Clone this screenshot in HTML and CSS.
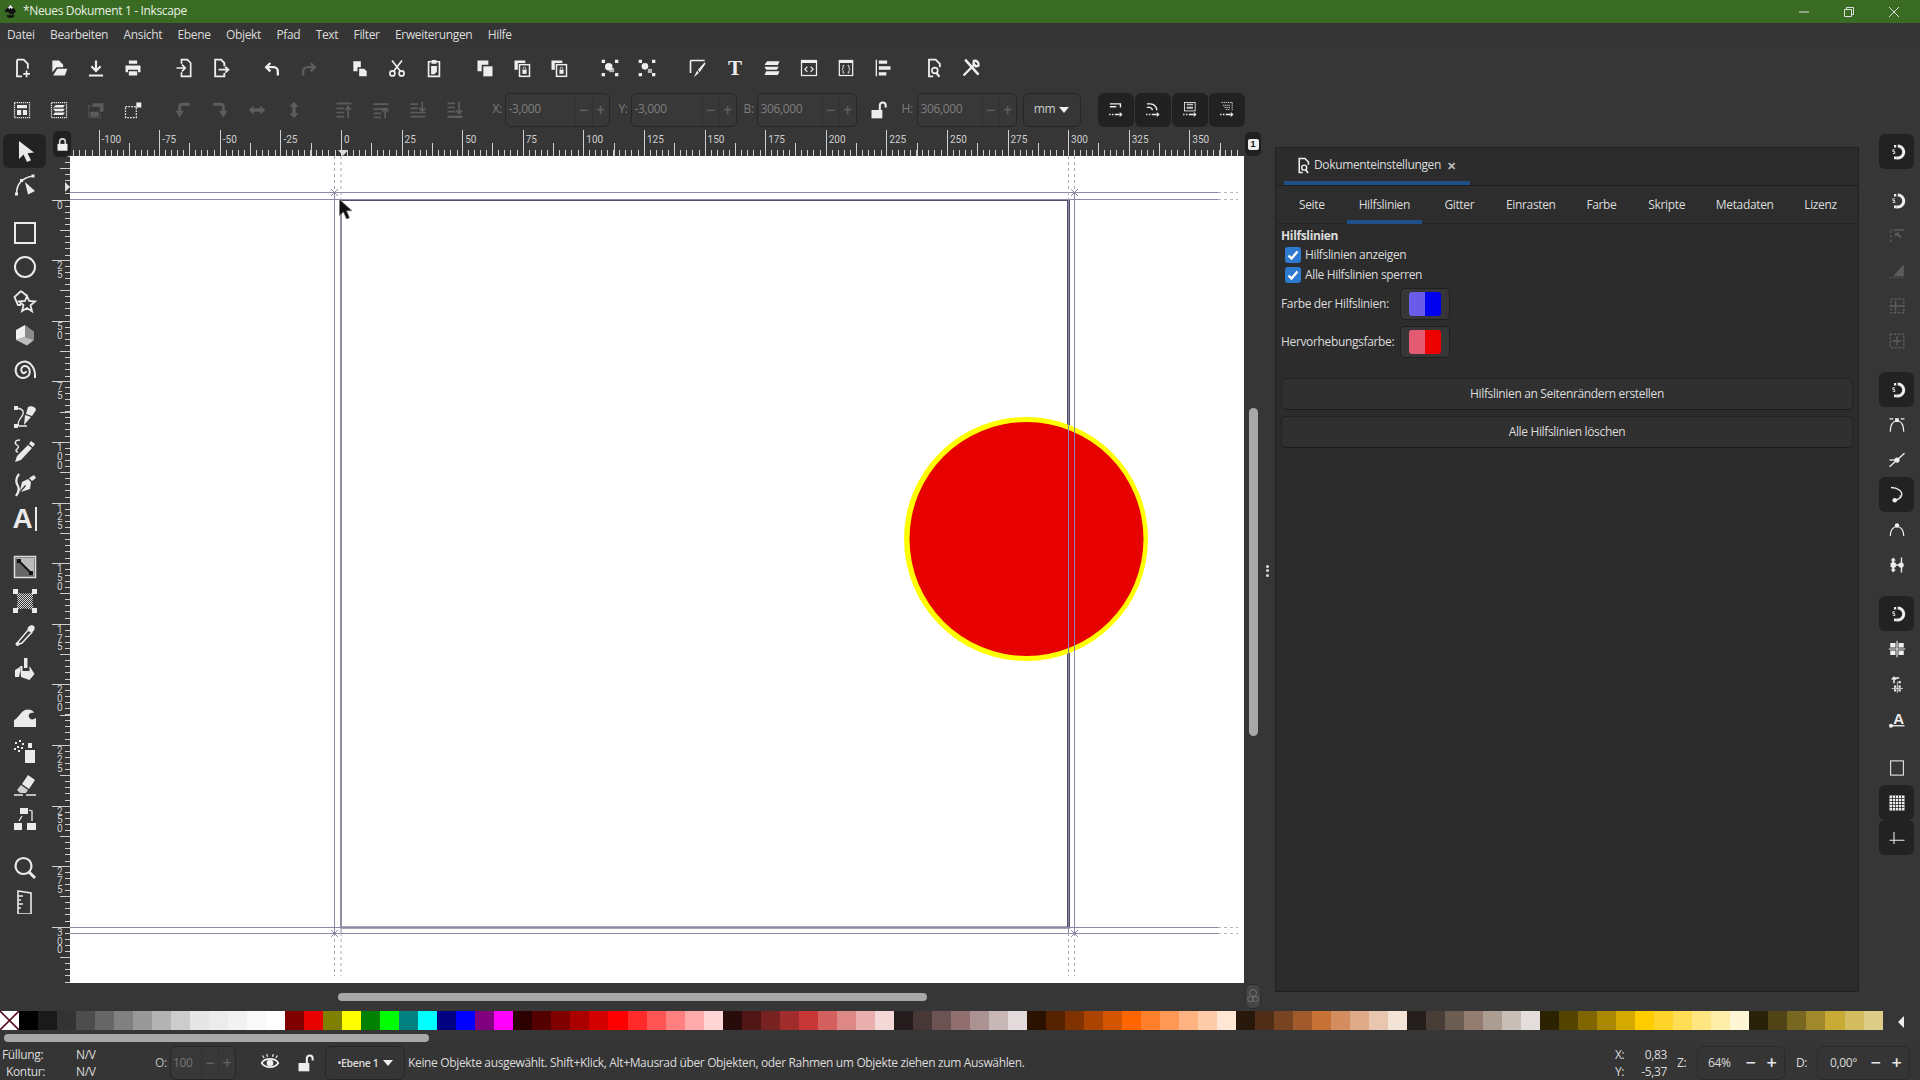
FILE: index.html
```html
<!DOCTYPE html>
<html lang="de">
<head>
<meta charset="utf-8">
<title>Neues Dokument 1 - Inkscape</title>
<link rel="stylesheet" href="styles.css">
</head>
<body>
<svg class="sprite" xmlns="http://www.w3.org/2000/svg">
<defs>
<pattern id="chk" width="2" height="2" patternUnits="userSpaceOnUse"><rect width="2" height="2" fill="#333"/><rect width="1" height="1" fill="#ddd"/><rect x="1" y="1" width="1" height="1" fill="#ddd"/></pattern>
<symbol id="new" viewBox="0 0 24 24"><path d="M6 2h8l5 5v6M6 2v20h6" fill="none" stroke="currentColor" stroke-width="2.200"/><path d="M17.500 15v8M13.500 19h8" fill="none" stroke="currentColor" stroke-width="2"/></symbol>
<symbol id="open" viewBox="0 0 24 24"><path d="M4 3h8l5 5v3H9l-5 6z"/><path d="M5 21l5-8h12l-3 8z"/></symbol>
<symbol id="save" viewBox="0 0 24 24"><path d="M12 3v12M6.500 10l5.500 5.500 5.500-5.500M3.500 21h17" fill="none" stroke="currentColor" stroke-width="2.600"/></symbol>
<symbol id="print" viewBox="0 0 24 24"><path d="M7 3h10v4H7zM3 9h18v8h-3v-3H6v3H3zM7 16h10v5H7z"/></symbol>
<symbol id="import" viewBox="0 0 24 24"><path d="M9 7V2h7l4 4v16H9v-5" fill="none" stroke="currentColor" stroke-width="2"/><path d="M3 12h10M9.500 8l4 4-4 4" fill="none" stroke="currentColor" stroke-width="2"/></symbol>
<symbol id="export" viewBox="0 0 24 24"><path d="M16 10V6l-4-4H5v20h11v-4" fill="none" stroke="currentColor" stroke-width="2.200"/><path d="M9 14h11M17 10.500l4 3.500-4 3.500" fill="none" stroke="currentColor" stroke-width="2"/></symbol>
<symbol id="undo" viewBox="0 0 24 24"><path d="M10 6l-5 5 5 5M5 11h9a5 5 0 0 1 5 5v5" fill="none" stroke="currentColor" stroke-width="2.800"/></symbol>
<symbol id="redo" viewBox="0 0 24 24"><path d="M14 6l5 5-5 5M19 11h-9a5 5 0 0 0-5 5v5" fill="none" stroke="currentColor" stroke-width="2.800"/></symbol>
<symbol id="copy" viewBox="0 0 24 24"><path d="M4 4h9v7H9v5H4z"/><path d="M11 13h6l3 3v6h-9z"/></symbol>
<symbol id="cut" viewBox="0 0 24 24"><g fill="none" stroke="currentColor" stroke-width="2"><circle cx="6.500" cy="18.500" r="3"/><circle cx="17.500" cy="18.500" r="3"/><path d="M8 16L18 3M16 16L6 3"/></g></symbol>
<symbol id="clip" viewBox="0 0 24 24"><path d="M9 4.500H5.500V22h13V4.500H15" fill="none" stroke="currentColor" stroke-width="2"/><path d="M9 2.500h6V7H9zM8.500 9.500h7v7l-3 3h-4z"/></symbol>
<symbol id="dup" viewBox="0 0 24 24"><path d="M3 3h13v5H8v8H3z"/><path d="M10 10h11v12H10z"/></symbol>
<symbol id="clone" viewBox="0 0 24 24"><path d="M3 3h13v3H7v8H3z"/><rect x="9" y="8" width="12" height="14" fill="none" stroke="currentColor" stroke-width="1.800"/><path d="M12.500 14h5v5h-5z"/><path d="M13.500 14v-1.500a1.500 1.500 0 0 1 3 0V14" fill="none" stroke="currentColor"/></symbol>
<symbol id="group" viewBox="0 0 24 24"><path d="M2 2h4v4H2zM18 2h4v4h-4zM2 18h4v4H2zM18 18h4v4h-4z"/><circle cx="10.500" cy="10.500" r="4.500"/><path d="M11 12h6v5h-6z" opacity=".7"/></symbol>
<symbol id="ungroup" viewBox="0 0 24 24"><path d="M2 2h4v4H2zM18 2h4v4h-4zM2 18h4v4H2zM18 18h4v4h-4z"/><circle cx="9.500" cy="10" r="4"/><path d="M13 13h5v5h-5z" opacity=".7"/></symbol>
<symbol id="fs" viewBox="0 0 24 24"><path d="M3 3h17M3 3v15" fill="none" stroke="currentColor" stroke-width="2"/><path d="M20 5L12 14l2 3 7-10zM11 15l2 3-6 5z"/></symbol>
<symbol id="layers" viewBox="0 0 24 24"><path d="M6 4h15l-2 4.500H3zM3 10.500h17l-2 3.500H5zM5 16h16l-2 4.500H3z"/></symbol>
<symbol id="xml" viewBox="0 0 24 24"><rect x="3" y="3" width="18" height="18" fill="none" stroke="currentColor" stroke-width="1.500"/><path d="M3 3h18v3H3z"/><path d="M10 10.500l-3 3 3 3M14 10.500l3 3-3 3" fill="none" stroke="currentColor" stroke-width="1.300"/></symbol>
<symbol id="css" viewBox="0 0 24 24"><rect x="4" y="3" width="16" height="18" fill="none" stroke="currentColor" stroke-width="1.500"/><path d="M4 3h16v3H4z"/><path d="M10 9H8.500v3l-1 1.500 1 1.500v3H10M14 9h1.500v3l1 1.500-1 1.500v3H14" fill="none" stroke="currentColor" stroke-width="1.100"/></symbol>
<symbol id="align" viewBox="0 0 24 24"><path d="M4 2v20" fill="none" stroke="currentColor" stroke-width="1.600"/><path d="M7 3h10v4H7zM7 10h14v4H7zM7 17h9v4H7z"/></symbol>
<symbol id="doc" viewBox="0 0 24 24"><path d="M11 22H6V2h8l5 5v4" fill="none" stroke="currentColor" stroke-width="2.200"/><circle cx="13" cy="15" r="3.500" fill="none" stroke="currentColor" stroke-width="2"/><path d="M15 18l3.500 4.500" fill="none" stroke="currentColor" stroke-width="2.500"/></symbol>
<symbol id="tools" viewBox="0 0 24 24"><path d="M3 21L16 8M15.500 3.500a4.500 4.500 0 0 1 5.500 5.500l-3 1-3-3z" fill="none" stroke="currentColor" stroke-width="2.800"/><path d="M5 2L21 20" fill="none" stroke="currentColor" stroke-width="3"/></symbol>
<symbol id="selall" viewBox="0 0 24 24"><rect x="3" y="3" width="18" height="18" fill="none" stroke="currentColor" stroke-width="1.500" stroke-dasharray="1.500 1"/><path d="M6 6h12v4H6zM6 12h5v6H6zM13 12h5v6h-5z"/></symbol>
<symbol id="sellay" viewBox="0 0 24 24"><rect x="3" y="3" width="18" height="18" fill="none" stroke="currentColor" stroke-width="1.500" stroke-dasharray="1.500 1"/><path d="M8 6h11l-2 3H5zM5 10.500h14l-2 3H7zM7 15h12l-2 3H5z"/></symbol>
<symbol id="desel" viewBox="0 0 24 24"><rect x="3" y="7" width="14" height="14" fill="none" stroke="currentColor" stroke-width="1.500" stroke-dasharray="1.500 1"/><path d="M8 4h13v10h-4V8H8zM5 14h10v6H5z"/></symbol>
<symbol id="trans" viewBox="0 0 24 24"><rect x="3" y="8" width="13" height="13" fill="none" stroke="currentColor" stroke-width="1.500" stroke-dasharray="2 1.500"/><path d="M16 3h6v6h-6z"/></symbol>
<symbol id="rccw" viewBox="0 0 24 24"><path d="M20 5h-9a3 3 0 0 0-3 3v6" fill="none" stroke="currentColor" stroke-width="3.500"/><path d="M3 13h10l-5 8z"/></symbol>
<symbol id="rcw" viewBox="0 0 24 24"><path d="M4 5h9a3 3 0 0 1 3 3v6" fill="none" stroke="currentColor" stroke-width="3.500"/><path d="M21 13H11l5 8z"/></symbol>
<symbol id="fliph" viewBox="0 0 24 24"><path d="M2 12l6-5.500V10h8V6.500l6 5.500-6 5.500V14H8v3.500z"/></symbol>
<symbol id="flipv" viewBox="0 0 24 24"><path d="M12 2l5.500 6H14v8h3.500L12 22l-5.500-6H10V8H6.500z"/></symbol>
<symbol id="rtop" viewBox="0 0 24 24"><path d="M3 3h18v2.500H3zM3 9h9v2H3zM3 14h9v2H3zM3 19h9v2H3z"/><path d="M17 22V9M13.500 12l3.500-4 3.500 4" fill="none" stroke="currentColor" stroke-width="2"/></symbol>
<symbol id="rup" viewBox="0 0 24 24"><path d="M3 4h18v2H3zM3 10h18v2H3zM3 15h9v2H3zM3 20h9v2H3z"/><path d="M17 22V11M13.500 14l3.500-4 3.500 4" fill="none" stroke="currentColor" stroke-width="2"/></symbol>
<symbol id="ldown" viewBox="0 0 24 24"><path d="M3 4h9v2H3zM3 9h9v2H3zM3 14h18v2H3zM3 19h18v2H3z"/><path d="M17 2v11M13.500 9.500l3.500 4 3.500-4" fill="none" stroke="currentColor" stroke-width="2"/></symbol>
<symbol id="lbot" viewBox="0 0 24 24"><path d="M3 3h9v2H3zM3 8h9v2H3zM3 13h9v2H3zM3 19h18v2.500H3z"/><path d="M17 2v14M13.500 12.500l3.500 4 3.500-4" fill="none" stroke="currentColor" stroke-width="2"/></symbol>
<symbol id="lock" viewBox="0 0 24 24"><path d="M4 11h16v11H4z"/><path d="M7.500 11V7.500a4.500 4.500 0 0 1 9 0V11" fill="none" stroke="currentColor" stroke-width="2.500"/></symbol>
<symbol id="unlock" viewBox="0 0 24 24"><path d="M3 12h13v10H3z"/><path d="M13 12V6.500a3.500 3.500 0 0 1 7 0V9" fill="none" stroke="currentColor" stroke-width="2.500"/></symbol>
<symbol id="eye" viewBox="0 0 24 24"><path d="M2 12c4-6.500 16-6.500 20 0-4 6.500-16 6.500-20 0z" fill="none" stroke="currentColor" stroke-width="2"/><circle cx="12" cy="12" r="4"/><path d="M5 6L3 3M9 4.500L8 1.500M15 4.500l1-3M19 6l2-3" fill="none" stroke="currentColor" stroke-width="1.500"/></symbol>
<symbol id="tg1" viewBox="0 0 24 24"><path d="M4 4h15v5M4 8h9M3 19h2M7 19h2M11 19h7" fill="none" stroke="currentColor" stroke-width="2"/><path d="M18 15.500l4 3.500-4 3.500z"/></symbol>
<symbol id="tg2" viewBox="0 0 24 24"><path d="M4 4h5a9 9 0 0 1 9 9M4 9h4a5 5 0 0 1 4 4M3 19h2M7 19h2M11 19h7" fill="none" stroke="currentColor" stroke-width="2"/><path d="M18 15.500l4 3.500-4 3.500z"/></symbol>
<symbol id="tg3" viewBox="0 0 24 24"><rect x="5" y="2" width="15" height="12" fill="none" stroke="currentColor" stroke-width="1.200"/><path d="M8 4h9v2H8zM8 8h9v3H8z" opacity=".8"/><path d="M3 19h2M7 19h2M11 19h7" fill="none" stroke="currentColor" stroke-width="2"/><path d="M18 15.500l4 3.500-4 3.500z"/></symbol>
<symbol id="tg4" viewBox="0 0 24 24"><path d="M5 2h15M20 2v12M7 6h10M9 9h8M11 12h6" fill="none" stroke="currentColor" stroke-width="1.200" stroke-dasharray="2 1"/><path d="M3 19h2M7 19h2M11 19h7" fill="none" stroke="currentColor" stroke-width="2"/><path d="M18 15.500l4 3.500-4 3.500z"/></symbol>
<symbol id="t-sel" viewBox="0 0 24 24"><path d="M6 2v18l4.500-4.500L14 23l4-1.800-3.500-7 6.500-.7z"/></symbol>
<symbol id="t-node" viewBox="0 0 24 24"><path d="M3.500 21C3.500 12 8 5 20 3" fill="none" stroke="currentColor" stroke-width="1.600"/><path d="M2 19.500h3v3H2zM7 6h3v3H7zM18.500 1.500h3v3h-3zM12 9l10 9-7 3.500z"/></symbol>
<symbol id="t-rect" viewBox="0 0 24 24"><rect x="2" y="2" width="20" height="20" fill="none" stroke="currentColor" stroke-width="2"/></symbol>
<symbol id="t-ell" viewBox="0 0 24 24"><circle cx="12" cy="12" r="10" fill="none" stroke="currentColor" stroke-width="2"/></symbol>
<symbol id="t-star" viewBox="0 0 24 24"><path d="M8 2L1.500 8 5 16h3M8 2l6 5" fill="none" stroke="currentColor" stroke-width="1.800"/><path d="M14 7l2.200 5 5.800.5-4.500 3.800 1.500 6-5-3.300-5 3 1.500-5.800-4.500-3.700 6-.5z" fill="none" stroke="currentColor" stroke-width="1.800"/></symbol>
<symbol id="t-3d" viewBox="0 0 24 24"><path d="M12 2L3 7v10l9-3z" fill="#f0f0f0"/><path d="M12 2l9 6.500V17l-9-3z" fill="#8a8a8a"/><path d="M3 17l9-3 9 3-7 5.500z" fill="#bdbdbd"/></symbol>
<symbol id="t-spi" viewBox="0 0 24 24"><path d="M22 21c1-11-6-18-13-16C3 7 1 13 4 18c3 4 9 4 12 0 2-4 0-9-4-9-3 0-5 3-3 6 1 2 4 1 4-1" fill="none" stroke="currentColor" stroke-width="2"/></symbol>
<symbol id="t-bez" viewBox="0 0 24 24"><path d="M3 3c10 1 8 6 4 11-2 3-3 5-1 7h8" fill="none" stroke="currentColor" stroke-width="1.300"/><path d="M1 1h4v4H1zM1 19h4v4H1zM15 2c3-2 8 0 8 3l-4 6-6-2zM12 10l6 2-7 8z"/></symbol>
<symbol id="t-pen" viewBox="0 0 24 24"><path d="M18 2l4 3-2 3-4-3zM15 6l4 3L8 21l-6 2 2-6z"/><path d="M7 1C2 1 1 4 4 6c3 2 1 3-1 5 0 2 2 2 2 2" fill="none" stroke="currentColor" stroke-width="1.400"/></symbol>
<symbol id="t-cal" viewBox="0 0 24 24"><path d="M21 2l2 3-4 3-3-3zM15 6l3 3-1 7-9 3 5-6-1-1-5 6 2-9z"/><path d="M6 1C2 6 3 10 5 13c2 4 0 7-2 10" fill="none" stroke="currentColor" stroke-width="2.200"/></symbol>
<symbol id="t-grad" viewBox="0 0 24 24"><rect x="1.500" y="1.500" width="21" height="21" fill="#666" stroke="#ddd" stroke-width="1.500"/><path d="M3 3h18v18z" fill="#bbb"/><path d="M6 6l12 12" stroke="#111" stroke-width="1.800"/><path d="M4 4h4v4H4zM16 16h4v4h-4z" fill="#111"/></symbol>
<symbol id="t-mesh" viewBox="0 0 24 24"><path d="M3 3C9 5 15 5 21 3C19 9 19 15 21 21C15 19 9 19 3 21C5 15 5 9 3 3z" fill="url(#chk)"/><path d="M0 0h5v5H0zM19 0h5v5h-5zM0 19h5v5H0zM19 19h5v5h-5z"/></symbol>
<symbol id="t-drop" viewBox="0 0 24 24"><path d="M16 6l3 3-10 11-3 1-1-2z" fill="none" stroke="currentColor" stroke-width="1.500"/><path d="M15 8c-2-4 3-7 6-5 2 3-1 7-4 6z"/><circle cx="4.500" cy="21" r="2"/></symbol>
<symbol id="t-fill" viewBox="0 0 24 24"><path d="M11 1h3.500v10H11z"/><path d="M7 9l2.500 0v5h7v-5l5 8-5 6L8 20zM2 13l5-3v5l-1 5H2z"/></symbol>
<symbol id="t-tweak" viewBox="0 0 24 24"><path d="M1 22v-7c3-1 5-5 8-8 4-4 11-3 12 1-4-1-6 2-5 4 1 3 4 3 7 1v9z"/></symbol>
<symbol id="t-spray" viewBox="0 0 24 24"><path d="M12 11h10v13H12z"/><path d="M15 4h4v5h-4z"/><path d="M2 3h2v2H2zM6 1h2v2H6zM9 4h2v2H9zM4 7h2v2H4zM8 8h2v2H8zM1 9h2v2H1zM5 11h2v2H5z"/></symbol>
<symbol id="t-era" viewBox="0 0 24 24"><path d="M15 2l7 5-6 9-7-5z"/><path d="M8 12l7 5-2 3H7l-3-3z" opacity=".85"/><path d="M1 22h9M13 22h10" fill="none" stroke="currentColor" stroke-width="1.500"/></symbol>
<symbol id="t-conn" viewBox="0 0 24 24"><path d="M7 1h8v6H7zM1 16h8v7H1zM14 16h9v7h-9z"/><path d="M9 9l-3 5M16 3l3 1 0 10" fill="none" stroke="currentColor" stroke-width="1.300"/></symbol>
<symbol id="t-zoom" viewBox="0 0 24 24"><circle cx="10.500" cy="10" r="8" fill="none" stroke="currentColor" stroke-width="2.200"/><path d="M16 16l6 6" fill="none" stroke="currentColor" stroke-width="3"/></symbol>
<symbol id="t-meas" viewBox="0 0 24 24"><path d="M5 1l13 2v21H5z" fill="none" stroke="currentColor" stroke-width="1.600"/><path d="M5 6h5M5 10h3M5 14h5M5 18h3" fill="none" stroke="currentColor" stroke-width="1.300"/></symbol>
<symbol id="magnet" viewBox="0 0 24 24"><path d="M13 4a8 8 0 0 1 0 16h-2" fill="none" stroke="currentColor" stroke-width="4"/><path d="M11 2.500v3.500h-3V2.500zM11 18v3.500H8V18z"/><path d="M9 9H6.500v2.500H9V14H6.500" fill="none" stroke="currentColor" stroke-width="1.200"/></symbol>
<symbol id="r-corner" viewBox="0 0 24 24"><path d="M7 3h15v2H7zM3 5h2v3H3zM3 11h2v3H3zM3 17h2v3H3zM3 3h2v1H3z"/><path d="M9 9l6-3-1 3 4 4-2 2-4-4-3 2z"/></symbol>
<symbol id="r-tri" viewBox="0 0 24 24"><path d="M21 3v16H7z"/><path d="M2 21h3M7 21h3M12 21h3M17 21h3" fill="none" stroke="currentColor" stroke-width="1.600"/></symbol>
<symbol id="r-box" viewBox="0 0 24 24"><rect x="4" y="3" width="17" height="18" fill="none" stroke="currentColor" stroke-width="2" stroke-dasharray="3 2"/><path d="M2 12h20M10 5v14" fill="none" stroke="currentColor" stroke-width="2"/></symbol>
<symbol id="r-plus" viewBox="0 0 24 24"><rect x="3" y="3" width="18" height="18" fill="none" stroke="currentColor" stroke-width="2" stroke-dasharray="3 2"/><path d="M12 6v12M6 12h12" fill="none" stroke="currentColor" stroke-width="2"/></symbol>
<symbol id="r-cusp" viewBox="0 0 24 24"><path d="M3 21C3 12 6 7 12 6c6 1 9 6 9 15" fill="none" stroke="currentColor" stroke-width="1.600"/><path d="M9.500 3h5v5h-5zM2 3h5v1.500H2zM17 3h5v1.500h-5z"/></symbol>
<symbol id="r-smooth" viewBox="0 0 24 24"><path d="M2 21L22 3" fill="none" stroke="currentColor" stroke-width="1.800"/><circle cx="12" cy="12" r="3.500"/><path d="M2 12h8" fill="none" stroke="currentColor" stroke-width="1.800"/></symbol>
<symbol id="r-curve" viewBox="0 0 24 24"><path d="M4 2c9 0 16 5 14 11-1 3-5 5-8 6" fill="none" stroke="currentColor" stroke-width="1.800"/><circle cx="9" cy="19" r="3"/><path d="M16 16v-4" stroke="currentColor" fill="none"/></symbol>
<symbol id="r-arc" viewBox="0 0 24 24"><path d="M3 20C3 12 7 8 12 7c5 1 9 5 9 13" fill="none" stroke="currentColor" stroke-width="1.600"/><circle cx="12" cy="6" r="3"/></symbol>
<symbol id="r-vbar" viewBox="0 0 24 24"><path d="M7 2l3.500 4h-2v3h2v6h-2v3h2L7 22l-3.500-4h2v-3h-2V9h2V6h-2z"/><path d="M18 2v20M10 12h10" fill="none" stroke="currentColor" stroke-width="1.800"/><circle cx="17.500" cy="12" r="3.500"/></symbol>
<symbol id="r-cen" viewBox="0 0 24 24"><path d="M3 4h7v6H3zM14 4h7v6h-7zM3 14h7v6H3zM14 14h7v6h-7z"/><path d="M12 1v22M1 12h22" fill="none" stroke="currentColor" stroke-width="1.500"/></symbol>
<symbol id="r-rot" viewBox="0 0 24 24"><path d="M7 11V7a3 3 0 0 1 3-3h4M4 6l3-3 3 3" fill="none" stroke="currentColor" stroke-width="2" transform="translate(1 0)"/><path d="M8 14h3v3H8zM14 14h3v3h-3zM8 19h3v3H8zM14 19h3v3h-3zM14 8h3v3h-3z"/><path d="M12.500 9v15M5 18h15" fill="none" stroke="currentColor" stroke-width="1"/></symbol>
<symbol id="r-page" viewBox="0 0 24 24"><rect x="3.500" y="2.500" width="17" height="19" fill="none" stroke="currentColor" stroke-width="1.400"/></symbol>
<symbol id="r-grid" viewBox="0 0 24 24"><path d="M2 2h20v20H2z"/><path d="M6 2v20M10 2v20M14 2v20M18 2v20M2 6h20M2 10h20M2 14h20M2 18h20" stroke="#222" fill="none" stroke-width="1"/></symbol>
<symbol id="r-axes" viewBox="0 0 24 24"><path d="M8 4v16M2 15h20" fill="none" stroke="currentColor" stroke-width="1.400"/></symbol>
</defs>
</svg>

<div class="app">
  <header class="titlebar">
    <svg class="logo" viewBox="0 0 24 24"><path d="M12 1L2 11l4 3 2-2 3 5 2-2 2 3 6-7z" fill="#111"/><path d="M12 1L8 6l2 2 2-2 2 2 2-2z" fill="#eee"/><path d="M5 18h14l-3 4H8z" fill="#111"/></svg>
    <span class="title-text">*Neues Dokument 1 - Inkscape</span>
    <div class="win-controls">
      <svg class="win" viewBox="0 0 12 12"><path d="M1 6h10" stroke="#ddd" fill="none"/></svg>
      <svg class="win" viewBox="0 0 12 12"><path d="M1.500 3.500h7v7h-7zM3.500 3.500v-2h7v7h-2" stroke="#ddd" fill="none"/></svg>
      <svg class="win" viewBox="0 0 12 12"><path d="M1 1l10 10M11 1L1 11" stroke="#ddd" fill="none"/></svg>
    </div>
  </header>

  <nav class="menubar">
    <span>Datei</span><span>Bearbeiten</span><span>Ansicht</span><span>Ebene</span><span>Objekt</span><span>Pfad</span><span>Text</span><span>Filter</span><span>Erweiterungen</span><span>Hilfe</span>
  </nav>

  <div class="toolbar tb1">
    <div class="tgroup"><span class="ib"><svg class="i"><use href="#new"/></svg></span><span class="ib"><svg class="i"><use href="#open"/></svg></span><span class="ib"><svg class="i"><use href="#save"/></svg></span><span class="ib"><svg class="i"><use href="#print"/></svg></span></div>
    <div class="tgroup"><span class="ib"><svg class="i"><use href="#import"/></svg></span><span class="ib"><svg class="i"><use href="#export"/></svg></span></div>
    <div class="tgroup"><span class="ib"><svg class="i"><use href="#undo"/></svg></span><span class="ib dim"><svg class="i"><use href="#redo"/></svg></span></div>
    <div class="tgroup"><span class="ib"><svg class="i"><use href="#copy"/></svg></span><span class="ib"><svg class="i"><use href="#cut"/></svg></span><span class="ib"><svg class="i"><use href="#clip"/></svg></span></div>
    <div class="tgroup"><span class="ib"><svg class="i"><use href="#dup"/></svg></span><span class="ib"><svg class="i"><use href="#clone"/></svg></span><span class="ib"><svg class="i"><use href="#clone"/></svg></span></div>
    <div class="tgroup"><span class="ib"><svg class="i"><use href="#group"/></svg></span><span class="ib"><svg class="i"><use href="#ungroup"/></svg></span></div>
    <div class="tgroup"><span class="ib"><svg class="i"><use href="#fs"/></svg></span><span class="ib"><span class="t-glyph">T</span></span><span class="ib"><svg class="i"><use href="#layers"/></svg></span><span class="ib"><svg class="i"><use href="#xml"/></svg></span><span class="ib"><svg class="i"><use href="#css"/></svg></span><span class="ib"><svg class="i"><use href="#align"/></svg></span></div>
    <div class="tgroup"><span class="ib"><svg class="i"><use href="#doc"/></svg></span><span class="ib"><svg class="i"><use href="#tools"/></svg></span></div>
  </div>

  <div class="toolbar tb2">
    <div class="tgroup"><span class="ib"><svg class="i"><use href="#selall"/></svg></span><span class="ib"><svg class="i"><use href="#sellay"/></svg></span><span class="ib dim"><svg class="i"><use href="#desel"/></svg></span><span class="ib"><svg class="i"><use href="#trans"/></svg></span></div>
    <div class="tgroup"><span class="ib dim"><svg class="i"><use href="#rccw"/></svg></span><span class="ib dim"><svg class="i"><use href="#rcw"/></svg></span><span class="ib dim"><svg class="i"><use href="#fliph"/></svg></span><span class="ib dim"><svg class="i"><use href="#flipv"/></svg></span></div>
    <div class="tgroup"><span class="ib dim"><svg class="i"><use href="#rtop"/></svg></span><span class="ib dim"><svg class="i"><use href="#rup"/></svg></span><span class="ib dim"><svg class="i"><use href="#ldown"/></svg></span><span class="ib dim"><svg class="i"><use href="#lbot"/></svg></span></div>
    <span class="dimlabel lx">X:</span>
    <div class="spin sx"><span class="val">-3,000</span><span class="pm">−</span><span class="pm">+</span></div>
    <span class="dimlabel ly">Y:</span>
    <div class="spin sy"><span class="val">-3,000</span><span class="pm">−</span><span class="pm">+</span></div>
    <span class="dimlabel lw">B:</span>
    <div class="spin sb"><span class="val">306,000</span><span class="pm">−</span><span class="pm">+</span></div>
    <span class="lockwrap"><svg class="i"><use href="#unlock"/></svg></span>
    <span class="dimlabel lh">H:</span>
    <div class="spin sb"><span class="val">306,000</span><span class="pm">−</span><span class="pm">+</span></div>
    <div class="unit"><span>mm</span><span class="tri-down"></span></div>
    <div class="toggles">
      <span class="tog"><svg class="i"><use href="#tg1"/></svg></span><span class="tog"><svg class="i"><use href="#tg2"/></svg></span><span class="tog"><svg class="i"><use href="#tg3"/></svg></span><span class="tog"><svg class="i"><use href="#tg4"/></svg></span>
    </div>
  </div>

  <main class="workspace">
    <aside class="lefttools">
      <div class="lgroup"><span class="lb active"><svg class="li"><use href="#t-sel"/></svg></span><span class="lb"><svg class="li"><use href="#t-node"/></svg></span></div>
      <div class="lgroup"><span class="lb"><svg class="li"><use href="#t-rect"/></svg></span><span class="lb"><svg class="li"><use href="#t-ell"/></svg></span><span class="lb"><svg class="li"><use href="#t-star"/></svg></span><span class="lb"><svg class="li"><use href="#t-3d"/></svg></span><span class="lb"><svg class="li"><use href="#t-spi"/></svg></span></div>
      <div class="lgroup"><span class="lb"><svg class="li"><use href="#t-bez"/></svg></span><span class="lb"><svg class="li"><use href="#t-pen"/></svg></span><span class="lb"><svg class="li"><use href="#t-cal"/></svg></span><span class="lb"><span class="a-glyph">A<i class="a-bar"></i></span></span></div>
      <div class="lgroup"><span class="lb"><svg class="li"><use href="#t-grad"/></svg></span><span class="lb"><svg class="li"><use href="#t-mesh"/></svg></span><span class="lb"><svg class="li"><use href="#t-drop"/></svg></span><span class="lb"><svg class="li"><use href="#t-fill"/></svg></span></div>
      <div class="lgroup"><span class="lb"><svg class="li"><use href="#t-tweak"/></svg></span><span class="lb"><svg class="li"><use href="#t-spray"/></svg></span><span class="lb"><svg class="li"><use href="#t-era"/></svg></span><span class="lb"><svg class="li"><use href="#t-conn"/></svg></span></div>
      <div class="lgroup last"><span class="lb"><svg class="li"><use href="#t-zoom"/></svg></span><span class="lb"><svg class="li"><use href="#t-meas"/></svg></span></div>
    </aside>

    <section class="canvas-area">
      <div class="corner"><svg class="lock-ic"><use href="#lock"/></svg></div>
      <div class="hruler">
        <div class="hcell hfirst"></div>
        <div class="hcell"><span>-100</span></div><div class="hcell"><span>-75</span></div><div class="hcell"><span>-50</span></div><div class="hcell"><span>-25</span></div><div class="hcell"><span>0</span></div><div class="hcell"><span>25</span></div><div class="hcell"><span>50</span></div><div class="hcell"><span>75</span></div><div class="hcell"><span>100</span></div><div class="hcell"><span>125</span></div><div class="hcell"><span>150</span></div><div class="hcell"><span>175</span></div><div class="hcell"><span>200</span></div><div class="hcell"><span>225</span></div><div class="hcell"><span>250</span></div><div class="hcell"><span>275</span></div><div class="hcell"><span>300</span></div><div class="hcell"><span>325</span></div><div class="hcell"><span>350</span></div><div class="hcell"></div>
        <i class="mark-h"></i>
      </div>
      <div class="pagebadge"><span class="pagenum">1</span></div>

      <div class="vruler">
        <div class="vcell vfirst"></div>
        <div class="vcell"><span>0</span></div><div class="vcell"><span>2<br>5</span></div><div class="vcell"><span>5<br>0</span></div><div class="vcell"><span>7<br>5</span></div><div class="vcell"><span>1<br>0<br>0</span></div><div class="vcell"><span>1<br>2<br>5</span></div><div class="vcell"><span>1<br>5<br>0</span></div><div class="vcell"><span>1<br>7<br>5</span></div><div class="vcell"><span>2<br>0<br>0</span></div><div class="vcell"><span>2<br>2<br>5</span></div><div class="vcell"><span>2<br>5<br>0</span></div><div class="vcell"><span>2<br>7<br>5</span></div><div class="vcell"><span>3<br>0<br>0</span></div>
        <i class="mark-v"></i>
      </div>

      <div class="canvas">
        <svg class="drawing" viewBox="0 0 1174 827" xmlns="http://www.w3.org/2000/svg">
          <path d="M271 44H999V771.500H271" fill="none" stroke="#4e4e66" stroke-width="2"/>
          <path d="M998.500 44v727.500" fill="none" stroke="#4e4e66" stroke-width="3"/>
          <path d="M271 44v727.500" fill="none" stroke="#4e4e62" stroke-width="1.200"/>
          <circle cx="956" cy="383" r="122" fill="#ffff00"/>
          <circle cx="956.500" cy="383" r="117" fill="#e60000"/>
          <g stroke="#8a8aa8" stroke-width="1" fill="none">
            <path d="M0 36.500H1148M0 43.500H1148M0 771.500H1148M0 777.500H1148"/>
            <path d="M264.500 36v741M271 44v733M998.500 44v733M1004.500 36v741"/>
            <path d="M264.500 0v36M271 0v44M998.500 0v44M1004.500 0v36M264.500 777v43M271 777v43M998.500 777v43M1004.500 777v43" stroke="#a8a8b4" stroke-dasharray="3 3"/>
            <path d="M1148 36.500h20M1148 43.500h20M1148 771.500h20M1148 777.500h20" stroke="#b4b4bc" stroke-dasharray="3 3"/>
            <path d="M261 33l7 7M268 33l-7 7M1001 33l7 7M1008 33l-7 7M261 774l7 7M268 774l-7 7M1001 774l7 7M1008 774l-7 7"/>
          </g>
          <path d="M269.500 43.500v16l4-3.500 3 7 3-1.200-3-7h5.500z" fill="#111" stroke="#777" stroke-width=".6"/>
        </svg>
      </div>
      <div class="vscroll"><span class="vthumb"></span></div>

      <div class="cell-empty"></div>
      <div class="hscroll"><span class="hthumb"></span></div>
      <div class="cms"><svg class="cms-ic" viewBox="0 0 16 24"><g fill="none" stroke="#777" stroke-width="1"><circle cx="8" cy="8" r="4"/><circle cx="5" cy="15" r="3"/><circle cx="11" cy="15" r="3"/></g></svg></div>
    </section>

    <div class="handle"><i></i><i></i><i></i></div>

    <section class="panel">
      <div class="panel-tabs">
        <div class="ptab"><svg class="ptab-ic"><use href="#doc"/></svg><span>Dokumenteinstellungen</span><span class="ptab-x">✕</span></div>
      </div>
      <div class="nb-tabs">
        <span class="nb nb1">Seite</span><span class="nb nb2 on">Hilfslinien</span><span class="nb nb3">Gitter</span><span class="nb nb4">Einrasten</span><span class="nb nb5">Farbe</span><span class="nb nb6">Skripte</span><span class="nb nb7">Metadaten</span><span class="nb nb8">Lizenz</span>
      </div>
      <div class="panel-body">
        <div class="heading">Hilfslinien</div>
        <label class="check"><span class="box"><svg viewBox="0 0 16 16"><path d="M3.500 8.500l3 3 6-7" fill="none" stroke="#fff" stroke-width="2.400"/></svg></span>Hilfslinien anzeigen</label>
        <label class="check"><span class="box"><svg viewBox="0 0 16 16"><path d="M3.500 8.500l3 3 6-7" fill="none" stroke="#fff" stroke-width="2.400"/></svg></span>Alle Hilfslinien sperren</label>
        <div class="colorrow first"><span class="clabel">Farbe der Hilfslinien:</span><span class="cbtn"><span class="sw blue-a"></span><span class="sw blue-b"></span></span></div>
        <div class="colorrow"><span class="clabel">Hervorhebungsfarbe:</span><span class="cbtn"><span class="sw red-a"></span><span class="sw red-b"></span></span></div>
        <div class="wide w1">Hilfslinien an Seitenrändern erstellen</div>
        <div class="wide">Alle Hilfslinien löschen</div>
      </div>
    </section>

    <aside class="righttools">
      <div class="rgroup"><span class="rb active"><svg class="ri"><use href="#magnet"/></svg></span></div>
      <div class="rgroup"><span class="rb"><svg class="ri"><use href="#magnet"/></svg></span><span class="rb dim"><svg class="ri"><use href="#r-corner"/></svg></span><span class="rb dim"><svg class="ri"><use href="#r-tri"/></svg></span><span class="rb dim"><svg class="ri"><use href="#r-box"/></svg></span><span class="rb dim"><svg class="ri"><use href="#r-plus"/></svg></span></div>
      <div class="rgroup"><span class="rb active"><svg class="ri"><use href="#magnet"/></svg></span><span class="rb"><svg class="ri"><use href="#r-cusp"/></svg></span><span class="rb"><svg class="ri"><use href="#r-smooth"/></svg></span><span class="rb active"><svg class="ri"><use href="#r-curve"/></svg></span><span class="rb"><svg class="ri"><use href="#r-arc"/></svg></span><span class="rb"><svg class="ri"><use href="#r-vbar"/></svg></span></div>
      <div class="rgroup"><span class="rb active"><svg class="ri"><use href="#magnet"/></svg></span><span class="rb"><svg class="ri"><use href="#r-cen"/></svg></span><span class="rb"><svg class="ri"><use href="#r-rot"/></svg></span><span class="rb"><svg class="ri" viewBox="0 0 24 24"><text x="7" y="18" class="ra-text">A</text><path d="M4 21h18" stroke="#eee" stroke-width="1.800"/><circle cx="4" cy="21" r="2.800"/></svg></span></div>
      <div class="rgroup"><span class="rb"><svg class="ri"><use href="#r-page"/></svg></span><span class="rb active"><svg class="ri"><use href="#r-grid"/></svg></span><span class="rb active"><svg class="ri"><use href="#r-axes"/></svg></span></div>
    </aside>
  </main>

  <div class="palette">
    <span class="sw-x"><svg viewBox="0 0 19 19" preserveAspectRatio="none"><path d="M0 0l19 19M19 0L0 19" stroke="#5a1020" stroke-width="1.600"/></svg></span>
    <i style="background:#000"></i><i style="background:#1a1a1a"></i><i style="background:#333"></i><i style="background:#4d4d4d"></i><i style="background:#666"></i><i style="background:#808080"></i><i style="background:#999"></i><i style="background:#b3b3b3"></i><i style="background:#ccc"></i><i style="background:#e6e6e6"></i><i style="background:#ececec"></i><i style="background:#f2f2f2"></i><i style="background:#f9f9f9"></i><i style="background:#fff"></i>
    <i style="background:#800000"></i><i style="background:#e60000"></i><i style="background:#808000"></i><i style="background:#ffff00"></i><i style="background:#008000"></i><i style="background:#00ff00"></i><i style="background:#008080"></i><i style="background:#00ffff"></i><i style="background:#000080"></i><i style="background:#0000ff"></i><i style="background:#800080"></i><i style="background:#ff00ff"></i>
    <i style="background:#2b0000"></i><i style="background:#550000"></i><i style="background:#800000"></i><i style="background:#aa0000"></i><i style="background:#d40000"></i><i style="background:#ff0000"></i><i style="background:#ff2a2a"></i><i style="background:#ff5555"></i><i style="background:#ff8080"></i><i style="background:#ffaaaa"></i><i style="background:#ffd5d5"></i>
    <i style="background:#280b0b"></i><i style="background:#501616"></i><i style="background:#782121"></i><i style="background:#a02c2c"></i><i style="background:#c83737"></i><i style="background:#d35f5f"></i><i style="background:#de8787"></i><i style="background:#e9afaf"></i><i style="background:#f4d7d7"></i>
    <i style="background:#241c1c"></i><i style="background:#483737"></i><i style="background:#6c5353"></i><i style="background:#916f6f"></i><i style="background:#ac9393"></i><i style="background:#c8b7b7"></i><i style="background:#e3dbdb"></i>
    <i style="background:#2b1100"></i><i style="background:#552200"></i><i style="background:#803300"></i><i style="background:#aa4400"></i><i style="background:#d45500"></i><i style="background:#ff6600"></i><i style="background:#ff7f2a"></i><i style="background:#ff9955"></i><i style="background:#ffb380"></i><i style="background:#ffccaa"></i><i style="background:#ffe6d5"></i>
    <i style="background:#28170b"></i><i style="background:#502d16"></i><i style="background:#784421"></i><i style="background:#a05a2c"></i><i style="background:#c87137"></i><i style="background:#d38d5f"></i><i style="background:#deaa87"></i><i style="background:#e9c6af"></i><i style="background:#f4e3d7"></i>
    <i style="background:#241f1c"></i><i style="background:#483e37"></i><i style="background:#6c5d53"></i><i style="background:#917c6f"></i><i style="background:#ac9d93"></i><i style="background:#c8beb7"></i><i style="background:#e3dedb"></i>
    <i style="background:#2b2200"></i><i style="background:#554400"></i><i style="background:#806600"></i><i style="background:#aa8800"></i><i style="background:#d4aa00"></i><i style="background:#ffcc00"></i><i style="background:#ffd42a"></i><i style="background:#ffdd55"></i><i style="background:#ffe680"></i><i style="background:#ffeeaa"></i><i style="background:#fff6d5"></i>
    <i style="background:#28220b"></i><i style="background:#504416"></i><i style="background:#786721"></i><i style="background:#a0892c"></i><i style="background:#c8ab37"></i><i style="background:#d3bc5f"></i><i style="background:#decd87"></i>
    <span class="pal-arrow"></span>
  </div>
  <div class="palscroll"><span class="palthumb"></span></div>

  <footer class="statusbar">
    <div class="fillstroke">
      <div class="fs-row"><span class="fs-l">Füllung:</span><span>N/V</span></div>
      <div class="fs-row"><span class="fs-l k">Kontur:</span><span>N/V</span></div>
    </div>
    <span class="olabel">O:</span>
    <div class="spin so"><span class="val">100</span><span class="pm">−</span><span class="pm">+</span></div>
    <span class="eye"><svg class="i"><use href="#eye"/></svg></span>
    <span class="slock"><svg class="i"><use href="#unlock"/></svg></span>
    <div class="layer"><span>•Ebene 1</span><span class="tri-down"></span></div>
    <span class="msg">Keine Objekte ausgewählt. Shift+Klick, Alt+Mausrad über Objekten, oder Rahmen um Objekte ziehen zum Auswählen.</span>
    <div class="coords">
      <div class="co-row"><span>X:</span><span>0,83</span></div>
      <div class="co-row"><span>Y:</span><span>-5,37</span></div>
    </div>
    <span class="zl">Z:</span>
    <div class="spin2 sz"><span class="val2">64%</span><span class="pm2">−</span><span class="pm2">+</span></div>
    <span class="dl">D:</span>
    <div class="spin2 sd"><span class="val2">0,00°</span><span class="pm2">−</span><span class="pm2">+</span></div>
  </footer>
</div>
</body>
</html>
```
FILE: styles.css
```css
* { box-sizing: border-box; }
html, body { margin: 0; padding: 0; }
body { width: 1920px; height: 1080px; overflow: hidden; background: #363636; color: #dcdcdc; font: 12px/1.2 "Open Sans", "Noto Sans", sans-serif; letter-spacing: -0.35px; }
.sprite { position: absolute; width: 0; height: 0; }
.app { display: flex; flex-direction: column; height: 1080px; }

.titlebar { flex: none; height: 23px; background: #3a6b23; display: flex; align-items: center; padding-left: 3px; color: #e8efe4; font-size: 12px; }
.logo { width: 15px; height: 17px; margin-right: 5px; }
.win-controls { margin-left: auto; display: flex; gap: 33px; padding-right: 20px; }
.win { width: 12px; height: 12px; }

.menubar { flex: none; height: 24px; display: flex; align-items: center; padding-left: 7px; background: #353535; }
.menubar span { margin-right: 15.400px; }

.toolbar { flex: none; display: flex; align-items: center; padding-left: 3.500px; }
.tb1 { height: 42px; }
.tb2 { height: 41px; }
.tgroup { display: flex; margin-right: 14px; }
.tb2 .tgroup { margin-right: 13px; }
.tb2 .tgroup:nth-child(3) { margin-right: 0; }
.ib { width: 37px; height: 34px; display: flex; align-items: center; justify-content: center; color: #eee; }
.dim { color: #5c5c5c !important; }
.i { width: 20px; height: 20px; fill: currentColor; }
.t-glyph { font: bold 21px/1 "Liberation Serif", serif; color: #eee; letter-spacing: 0; }

.dimlabel { color: #7d7d7d; }
.lx { margin-left: 19px; width: 12px; }
.ly { margin-left: 9px; width: 12px; }
.lw { margin-left: 7px; width: 13px; }
.lh { width: 15px; }
.spin { display: flex; height: 34px; border: 1px solid #262626; border-radius: 6px; align-items: center; color: #7f7f7f; background: #383838; }
.sx { width: 105px; }
.sy { width: 106px; }
.sb { width: 100px; }
.so { width: 66px; }
.val { flex: 1; padding-left: 3px; white-space: nowrap; }
.pm { width: 17px; text-align: center; color: #626262; font-size: 16px; font-weight: 600; line-height: 32px; border-left: 1px solid #323232; }
.lockwrap { width: 45px; display: flex; justify-content: center; color: #eee; }
.unit { width: 58px; height: 34px; margin-left: 6px; border: 1px solid #262626; border-radius: 6px; display: flex; align-items: center; justify-content: center; gap: 4px; color: #ccc; font-size: 12px; }
.tri-down { width: 0; height: 0; border: 5.500px solid transparent; border-top: 6px solid #eee; border-bottom: 0; }
.toggles { display: flex; gap: 1px; margin-left: 17px; }
.tog { width: 36px; height: 34px; background: #212121; border-radius: 6px; display: flex; align-items: center; justify-content: center; color: #eee; }
.tog .i { width: 17px; height: 17px; }

.workspace { flex: none; height: 881px; display: flex; }
.lefttools { flex: none; width: 52px; padding: 4px 0 0 3px; display: flex; flex-direction: column; gap: 14px; }
.lgroup { display: flex; flex-direction: column; }
.lgroup.last { margin-top: 1px; }
.lb { width: 43px; height: 34px; display: flex; align-items: center; justify-content: center; color: #eaeaea; border-radius: 6px; }
.lb.active { background: #222; }
.li { width: 24px; height: 24px; fill: currentColor; }
.a-glyph { font: bold 28px/1 "Liberation Sans", sans-serif; color: #eaeaea; letter-spacing: 0; display: flex; align-items: center; }
.a-bar { width: 2px; height: 24px; background: #eaeaea; margin-left: 2px; }

.canvas-area { flex: none; width: 1210px; display: grid; grid-template-columns: 18px 1174px 18px; grid-template-rows: 26px 827px 28px; }
.corner { margin-left: 1px; width: 18px; height: 26px; margin-top: 1px; background: #202020; border-radius: 5px; display: flex; align-items: center; justify-content: center; position: relative; z-index: 2; }
.lock-ic { width: 15px; height: 17px; fill: #eee; }
.hruler { overflow: hidden; display: flex; position: relative; }
.hcell { flex: none; width: 60.600px; height: 26px; border-left: 1px solid #d0d0d0; padding: 4px 0 0 2px; font-size: 10px; line-height: 11px; letter-spacing: 0; font-family: "Roboto", sans-serif; color: #cfcfcf;
  background-image: repeating-linear-gradient(to right, #d0d0d0 0 1px, transparent 1px 6.060px), linear-gradient(#d0d0d0, #d0d0d0);
  background-size: 100% 6px, 1px 13px; background-position: -1px 100%, 29.300px 100%; background-repeat: no-repeat; }
.hfirst { margin-left: -32px; border-left: 0; }
.hcell span { display: block; }
.mark-h { position: absolute; left: 268px; bottom: 0; width: 0; height: 0; border: 5px solid transparent; border-top: 6px solid #ddd; border-bottom: 0; }
.pagebadge { background: #202020; margin-top: 2px; margin-left: 1px; width: 16px; height: 24px; border-radius: 5px; display: flex; align-items: center; justify-content: center; }
.pagenum { width: 11px; height: 11px; background: #eee; color: #111; border-radius: 2px; font: bold 9px/11px "Liberation Sans", sans-serif; text-align: center; letter-spacing: 0; }

.vruler { overflow: hidden; position: relative; }
.vcell { width: 18px; height: 60.600px; border-top: 1px solid #d0d0d0; font-size: 10px; line-height: 8.800px; letter-spacing: 0; color: #cfcfcf; font-family: "Roboto", sans-serif; padding: 1px 0 0 5px;
  background-image: repeating-linear-gradient(to bottom, #d0d0d0 0 1px, transparent 1px 6.060px), linear-gradient(#d0d0d0, #d0d0d0);
  background-size: 5px 100%, 10px 1px; background-position: 100% -1px, 100% 29.300px; background-repeat: no-repeat; }
.vfirst { margin-top: -17px; border-top: 0; }
.vcell span { display: block; }
.mark-v { position: absolute; right: 0; top: 26px; width: 0; height: 0; border: 5px solid transparent; border-left: 5px solid #ddd; border-right: 0; }

.canvas { background: #fff; overflow: hidden; }
.drawing { display: block; width: 1174px; height: 827px; }
.vscroll { padding: 252px 0 0 5px; }
.vthumb { display: block; width: 9px; height: 328px; border-radius: 5px; background: #a8a8a8; }
.hscroll { padding: 10px 0 0 268px; }
.hthumb { display: block; width: 589px; height: 8px; border-radius: 4px; background: #a8a8a8; }
.cms { margin: 1px 0 0 1px; width: 16px; height: 25px; border: 1px solid #2c2c2c; border-radius: 6px; background: #444; }
.cms-ic { display: block; width: 14px; height: 23px; }

.handle { flex: none; width: 13px; display: flex; flex-direction: column; align-items: flex-start; justify-content: center; gap: 1.500px; padding: 0 0 0 4px; }
.handle i { width: 3px; height: 3px; background: #ddd; border-radius: 50%; }

.panel { flex: none; width: 584px; height: 845px; margin-top: 17px; background: #2c2c2c; border: 1px solid #202020; display: flex; flex-direction: column; }
.panel-tabs { flex: none; height: 38px; padding-left: 8px; border-bottom: 1px solid #1e1e1e; display: flex; }
.ptab { width: 186px; height: 37px; border-bottom: 4px solid #1f4f87; display: flex; align-items: center; padding: 2px 0 0 11px; color: #dcdcdc; }
.ptab-ic { width: 17px; height: 17px; fill: #eee; color: #eee; margin-right: 2px; flex: none; }
.ptab-x { margin-left: 6px; font-size: 11px; font-weight: 700; color: #bdbdbd; }
.nb-tabs { flex: none; height: 38px; padding-top: 2px; border-bottom: 1px solid #232323; display: flex; align-items: center; background: #2d2d2d; margin: 0 1px; }
.nb { flex: none; }
.nb1 { margin-left: 22px; }
.nb2 { margin-left: 34px; }
.nb3 { margin-left: 34.400px; }
.nb4 { margin-left: 31.800px; }
.nb5 { margin-left: 30.800px; }
.nb6 { margin-left: 31.800px; }
.nb7 { margin-left: 30.800px; }
.nb8 { margin-left: 30.700px; }
.on { position: relative; }
.on::after { content: ""; position: absolute; left: -12px; right: -12px; top: 22px; height: 4px; background: #1f4f87; }
.panel-body { padding: 4px 5px 0 5px; }
.heading { font-weight: 700; line-height: 16px; margin-bottom: 1px; }
.check { display: flex; align-items: center; height: 20px; padding-left: 4px; gap: 4px; }
.box { width: 16px; height: 16px; background: #2c7bd0; border-radius: 3px; display: block; }
.box svg { display: block; }
.colorrow { display: flex; align-items: center; height: 32px; margin-top: 6px; }
.colorrow.first { margin-top: 3px; }
.clabel { width: 119px; flex: none; }
.cbtn { width: 50px; height: 32px; border: 1px solid #1e1e1e; border-radius: 5px; background: #363636; display: flex; align-items: center; justify-content: center; }
.sw { width: 16px; height: 24px; }
.blue-a { background: #6a5be8; border-radius: 3px 0 0 3px; }
.blue-b { background: #0000f0; border-radius: 0 3px 3px 0; }
.red-a { background: #e45a72; border-radius: 3px 0 0 3px; }
.red-b { background: #ec0000; border-radius: 0 3px 3px 0; }
.wide { height: 32px; margin: 6px 0 0; border: 1px solid #222; border-bottom-color: #1a1a1a; border-radius: 5px; background: #303030; display: flex; align-items: center; justify-content: center; }
.w1 { margin-top: 20px; }

.righttools { flex: none; width: 61px; padding: 4px 0 0 20px; display: flex; flex-direction: column; gap: 14px; }
.rgroup { display: flex; flex-direction: column; }
.rb { width: 35px; height: 35px; display: flex; align-items: center; justify-content: center; color: #eee; border-radius: 6px; }
.rb.active { background: #222; }
.ri { width: 18px; height: 18px; fill: currentColor; }
.ra-text { font: bold 20px "Liberation Sans", sans-serif; letter-spacing: 0; }

.palette { flex: none; height: 19px; display: flex; position: relative; }
.palette i { flex: none; width: 19.020px; height: 19px; }
.sw-x { flex: none; width: 19px; height: 19px; background: #fff; }
.sw-x svg { display: block; width: 19px; height: 19px; }
.pal-arrow { position: absolute; left: 1898px; top: 5px; width: 0; height: 0; border: 6px solid transparent; border-right: 6px solid #eee; border-left: 0; }
.palscroll { flex: none; height: 14px; padding: 4px 0 0 4px; }
.palthumb { display: block; width: 425px; height: 8px; border-radius: 4px; background: #a8a8a8; }

.statusbar { flex: none; height: 36px; padding-top: 2px; display: flex; align-items: center; background: #353535; }
.fillstroke { width: 155px; flex: none; }
.fs-row { display: flex; height: 17px; line-height: 17px; }
.fs-l { width: 76px; padding-left: 2px; }
.k { padding-left: 6px; }
.olabel { width: 15px; flex: none; color: #bdbdbd; }
.so .val { padding-left: 2px; color: #777; }
.eye { width: 36px; margin-left: 16px; display: flex; justify-content: center; color: #eee; }
.slock { width: 36px; display: flex; justify-content: center; color: #eee; }
.layer { width: 80px; height: 34px; margin-left: 1px; border: 1px solid #262626; border-radius: 6px; display: flex; align-items: center; justify-content: center; gap: 4px; font-size: 10.500px; font-weight: 600; }
.msg { margin-left: 3px; white-space: nowrap; }
.coords { margin-left: auto; width: 52px; flex: none; }
.co-row { display: flex; justify-content: space-between; height: 17px; line-height: 17px; }
.zl { margin-left: 10px; width: 20px; flex: none; }
.spin2 { height: 34px; border: 1px solid #2a2a2a; border-radius: 6px; display: flex; align-items: center; padding-right: 2px; }
.sz { width: 88px; padding-left: 10px; }
.sd { width: 93px; padding-left: 12px; margin-right: 10px; }
.dl { margin-left: 11px; width: 21px; flex: none; }
.val2 { flex: 1; }
.pm2 { width: 21px; text-align: center; font-size: 18px; font-weight: 600; color: #e6e6e6; }
```
